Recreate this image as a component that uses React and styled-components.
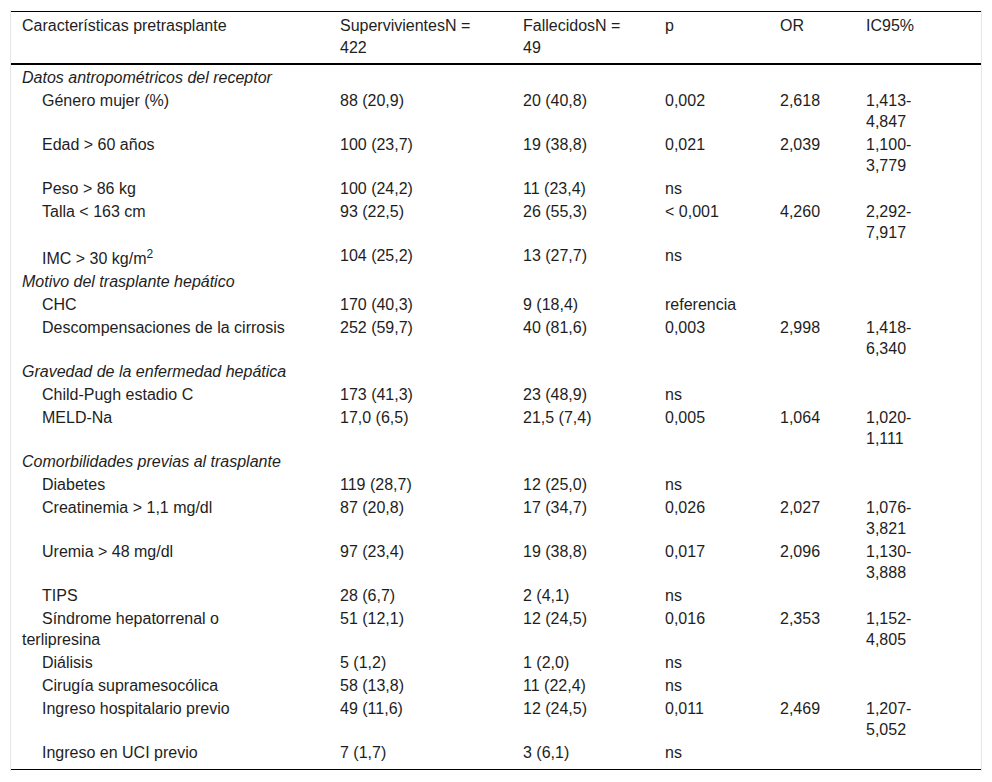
import React from "react";
import styled, { createGlobalStyle } from "styled-components";

const Global = createGlobalStyle`
  html, body { margin: 0; padding: 0; background: #fff; }
  body { font-family: "Liberation Sans", Arial, sans-serif; color: #1e1e1e; }
`;

const Page = styled.div`
  padding: 10px 10px 0 10px;
`;

const Frame = styled.div`
  border-left: 1px solid #e6e6e6;
  border-right: 1px solid #e6e6e6;
  width: 970px;
  padding: 1px 0 1px 0;
`;

const Table = styled.table`
  width: 970px;
  border-collapse: collapse;
  table-layout: fixed;
  font-size: 16px;
  line-height: 21px;
  border-top: 1px solid #000;
  border-bottom: 1px solid #000;

  col:nth-child(1) { width: 318px; }
  col:nth-child(2) { width: 183px; }
  col:nth-child(3) { width: 142px; }
  col:nth-child(4) { width: 115px; }
  col:nth-child(5) { width: 86px; }
  col:nth-child(6) { width: 126px; }
`;

const colPad = (i) => [36, 30, 26, 26, 20, 51][i];

const HeadCell = styled.th`
  text-align: left;
  font-weight: normal;
  vertical-align: top;
  line-height: 22px;
  padding: 3px ${(p) => colPad(p.$col)}px 4px 11px;
  border-bottom: 2px solid #000;
`;

const Cell = styled.td`
  vertical-align: top;
  padding: 1px ${(p) => colPad(p.$col)}px ${(p) => (p.$last ? 6 : 1)}px 11px;
  text-indent: ${(p) => (p.$indent ? "20px" : "0")};
`;

const GroupCell = styled.td`
  font-style: italic;
  padding: ${(p) => (p.$first ? "2px" : "1px")} 11px 1px 11px;
`;

const Sup = styled.sup`
  font-size: 0.75em;
  line-height: 19px;
`;

const headers = [
  "Características pretrasplante",
  "SupervivientesN = 422",
  "FallecidosN = 49",
  "p",
  "OR",
  "IC95%",
];

const groups = [
  {
    title: "Datos antropométricos del receptor",
    rows: [
      ["Género mujer (%)", "88 (20,9)", "20 (40,8)", "0,002", "2,618", "1,413-4,847"],
      ["Edad > 60 años", "100 (23,7)", "19 (38,8)", "0,021", "2,039", "1,100-3,779"],
      ["Peso > 86 kg", "100 (24,2)", "11 (23,4)", "ns", "", ""],
      ["Talla < 163 cm", "93 (22,5)", "26 (55,3)", "< 0,001", "4,260", "2,292-7,917"],
      [<>IMC &gt; 30 kg/m<Sup>2</Sup></>, "104 (25,2)", "13 (27,7)", "ns", "", ""],
    ],
  },
  {
    title: "Motivo del trasplante hepático",
    rows: [
      ["CHC", "170 (40,3)", "9 (18,4)", "referencia", "", ""],
      ["Descompensaciones de la cirrosis", "252 (59,7)", "40 (81,6)", "0,003", "2,998", "1,418-6,340"],
    ],
  },
  {
    title: "Gravedad de la enfermedad hepática",
    rows: [
      ["Child-Pugh estadio C", "173 (41,3)", "23 (48,9)", "ns", "", ""],
      ["MELD-Na", "17,0 (6,5)", "21,5 (7,4)", "0,005", "1,064", "1,020-1,111"],
    ],
  },
  {
    title: "Comorbilidades previas al trasplante",
    rows: [
      ["Diabetes", "119 (28,7)", "12 (25,0)", "ns", "", ""],
      ["Creatinemia > 1,1 mg/dl", "87 (20,8)", "17 (34,7)", "0,026", "2,027", "1,076-3,821"],
      ["Uremia > 48 mg/dl", "97 (23,4)", "19 (38,8)", "0,017", "2,096", "1,130-3,888"],
      ["TIPS", "28 (6,7)", "2 (4,1)", "ns", "", ""],
      ["Síndrome hepatorrenal o terlipresina", "51 (12,1)", "12 (24,5)", "0,016", "2,353", "1,152-4,805"],
      ["Diálisis", "5 (1,2)", "1 (2,0)", "ns", "", ""],
      ["Cirugía supramesocólica", "58 (13,8)", "11 (22,4)", "ns", "", ""],
      ["Ingreso hospitalario previo", "49 (11,6)", "12 (24,5)", "0,011", "2,469", "1,207-5,052"],
      ["Ingreso en UCI previo", "7 (1,7)", "3 (6,1)", "ns", "", ""],
    ],
  },
];

export default function App() {
  return (
    <Page>
      <Global />
      <Frame>
        <Table>
          <colgroup>
            <col /><col /><col /><col /><col /><col />
          </colgroup>
          <thead>
            <tr>
              {headers.map((h, i) => (
                <HeadCell key={i} $col={i}>{h}</HeadCell>
              ))}
            </tr>
          </thead>
          <tbody>
            {groups.map((g, gi) => (
              <React.Fragment key={gi}>
                <tr>
                  <GroupCell colSpan={6} $first={gi === 0}>{g.title}</GroupCell>
                </tr>
                {g.rows.map((r, ri) => {
                  const last = gi === groups.length - 1 && ri === g.rows.length - 1;
                  return (
                    <tr key={ri}>
                      {r.map((c, ci) => (
                        <Cell key={ci} $col={ci} $indent={ci === 0} $last={last}>{c}</Cell>
                      ))}
                    </tr>
                  );
                })}
              </React.Fragment>
            ))}
          </tbody>
        </Table>
      </Frame>
    </Page>
  );
}
